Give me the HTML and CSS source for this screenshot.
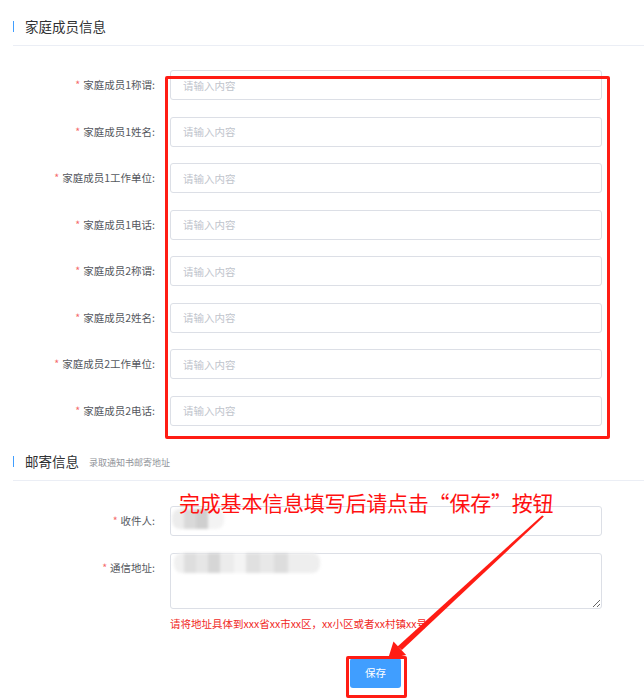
FILE: index.html
```html
<!DOCTYPE html>
<html lang="zh-CN">
<head>
<meta charset="utf-8">
<title>家庭成员信息</title>
<link rel="stylesheet" href="styles.css">
</head>
<body>
<div class="page">
  <div class="section-head first">
    <span class="section-title">家庭成员信息</span>
  </div>
  <form class="form form-family">
    <div class="row"><label class="label"><span class="req">*</span>家庭成员1称谓:</label><input class="input" placeholder="请输入内容"></div>
    <div class="row"><label class="label"><span class="req">*</span>家庭成员1姓名:</label><input class="input" placeholder="请输入内容"></div>
    <div class="row"><label class="label"><span class="req">*</span>家庭成员1工作单位:</label><input class="input" placeholder="请输入内容"></div>
    <div class="row"><label class="label"><span class="req">*</span>家庭成员1电话:</label><input class="input" placeholder="请输入内容"></div>
    <div class="row"><label class="label"><span class="req">*</span>家庭成员2称谓:</label><input class="input" placeholder="请输入内容"></div>
    <div class="row"><label class="label"><span class="req">*</span>家庭成员2姓名:</label><input class="input" placeholder="请输入内容"></div>
    <div class="row"><label class="label"><span class="req">*</span>家庭成员2工作单位:</label><input class="input" placeholder="请输入内容"></div>
    <div class="row"><label class="label"><span class="req">*</span>家庭成员2电话:</label><input class="input" placeholder="请输入内容"></div>
  </form>

  <div class="section-head">
    <span class="section-title">邮寄信息</span>
    <span class="section-sub">录取通知书邮寄地址</span>
  </div>
  <form class="form form-mail">
    <div class="row">
      <label class="label"><span class="req">*</span>收件人:</label>
      <div class="field">
        <input class="input">
        <span class="blur blur-name"></span>
      </div>
    </div>
    <div class="row row-area">
      <label class="label"><span class="req">*</span>通信地址:</label>
      <div class="field">
        <textarea class="textarea"></textarea>
        <span class="blur blur-addr"></span>
        <div class="hint">请将地址具体到xxx省xx市xx区，xx小区或者xx村镇xx号</div>
      </div>
    </div>
    <div class="actions">
      <button type="button" class="btn">保存</button>
    </div>
  </form>

  <div class="mark mark-family"></div>
  <div class="mark mark-btn"></div>
  <div class="note">完成基本信息填写后请点击“保存”按钮</div>
  <svg class="arrow" width="644" height="698" viewBox="0 0 644 698">
    <polygon points="543.9,509.6 542.1,508.4 397.6,639.4 401.9,643.1" fill="#ff1c14"/>
    <polygon points="388,652 393.5,634.4 406.1,647.9" fill="#ff1c14"/>
  </svg>
</div>
</body>
</html>
```
FILE: styles.css
```css
html, body {
  margin: 0;
  padding: 0;
  background: #ffffff;
}
body {
  font-family: "Noto Sans CJK SC", "Noto Sans", sans-serif;
  color: #606266;
  width: 644px;
  height: 698px;
  overflow: hidden;
}
.page {
  position: relative;
  width: 644px;
  height: 698px;
  padding-left: 13px;
  box-sizing: border-box;
}
.section-head {
  display: flex;
  align-items: center;
  height: 38px;
  border-bottom: 1px solid #ebeef5;
}
.section-head.first {
  margin-top: 7px;
}
.section-title {
  font-size: 13.5px;
  color: #303133;
  border-left: 1px solid #409eff;
  padding-left: 11px;
  line-height: 11px;
  height: 11px;
  display: flex;
  align-items: center;
}
.section-sub {
  font-size: 9px;
  color: #909399;
  margin-left: 10px;
  margin-top: 2px;
}
.form {
  display: flex;
  flex-direction: column;
  gap: 16.5px;
  margin-top: 24px;
  margin-bottom: 16.5px;
}
.form-mail {
  margin-top: 25px;
}
.row {
  display: flex;
  align-items: center;
}
.row-area {
  align-items: flex-start;
}
.label {
  width: 157px;
  flex: none;
  box-sizing: border-box;
  padding-right: 15px;
  text-align: right;
  font-size: 10.5px;
  line-height: 30px;
  color: #55585e;
}
.req {
  color: #f56c6c;
  margin-right: 3px;
}
.field {
  position: relative;
  width: 431.5px;
}
.input {
  width: 431.5px;
  height: 30px;
  box-sizing: border-box;
  border: 1px solid #dcdfe6;
  border-radius: 3px;
  padding: 0 12px;
  font-family: inherit;
  font-size: 10.5px;
  color: #606266;
  outline: none;
  background: #fff;
}
.input::placeholder {
  color: #c0c4cc;
}
.textarea {
  display: block;
  width: 431.5px;
  height: 56px;
  box-sizing: border-box;
  border: 1px solid #dcdfe6;
  border-radius: 3px;
  padding: 4px 12px;
  font-family: inherit;
  font-size: 10.5px;
  resize: vertical;
  outline: none;
  margin: 0;
}
.hint {
  font-size: 10.5px;
  color: #f0281e;
  margin-top: 8px;
  line-height: 14px;
}
.blur {
  position: absolute;
  border-radius: 8px;
  filter: blur(1.5px);
}
.blur-name {
  left: 2px;
  top: 3px;
  width: 52px;
  height: 20px;
  background:
    linear-gradient(90deg, #ececec 0 12px, #d9d9d9 12px 24px, #cfcfcf 24px 36px, #f3f3f3 36px 52px);
}
.blur-addr {
  left: 4px;
  top: 0px;
  width: 146px;
  height: 20px;
  background:
    linear-gradient(90deg, #f0f0f0 0 10px, #dedede 10px 22px, #e6e6e6 22px 34px, #d6d6d6 34px 46px, #ececec 46px 60px, #f4f4f4 60px 72px, #e0e0e0 72px 86px, #e8e8e8 86px 100px, #dddddd 100px 114px, #eeeeee 114px 146px);
}
.actions {
  display: flex;
  padding-left: 337px;
  margin-top: 10.5px;
}
.btn {
  width: 51px;
  height: 30px;
  border: none;
  border-radius: 3px;
  background: #409eff;
  color: #ffffff;
  font-family: inherit;
  font-size: 10.5px;
  padding: 0;
}
.mark {
  position: absolute;
  border: 3px solid #ff1c14;
  border-radius: 2px;
  box-sizing: border-box;
}
.mark-family {
  left: 165px;
  top: 69px;
  width: 445px;
  height: 363px;
}
.mark-btn {
  left: 346px;
  top: 649px;
  width: 61px;
  height: 42px;
}
.note {
  position: absolute;
  left: 179px;
  top: 481px;
  font-size: 21px;
  line-height: 28px;
  color: #ff1010;
  white-space: nowrap;
  letter-spacing: -0.2px;
}
.arrow {
  position: absolute;
  left: 0;
  top: 0;
  pointer-events: none;
}
```
